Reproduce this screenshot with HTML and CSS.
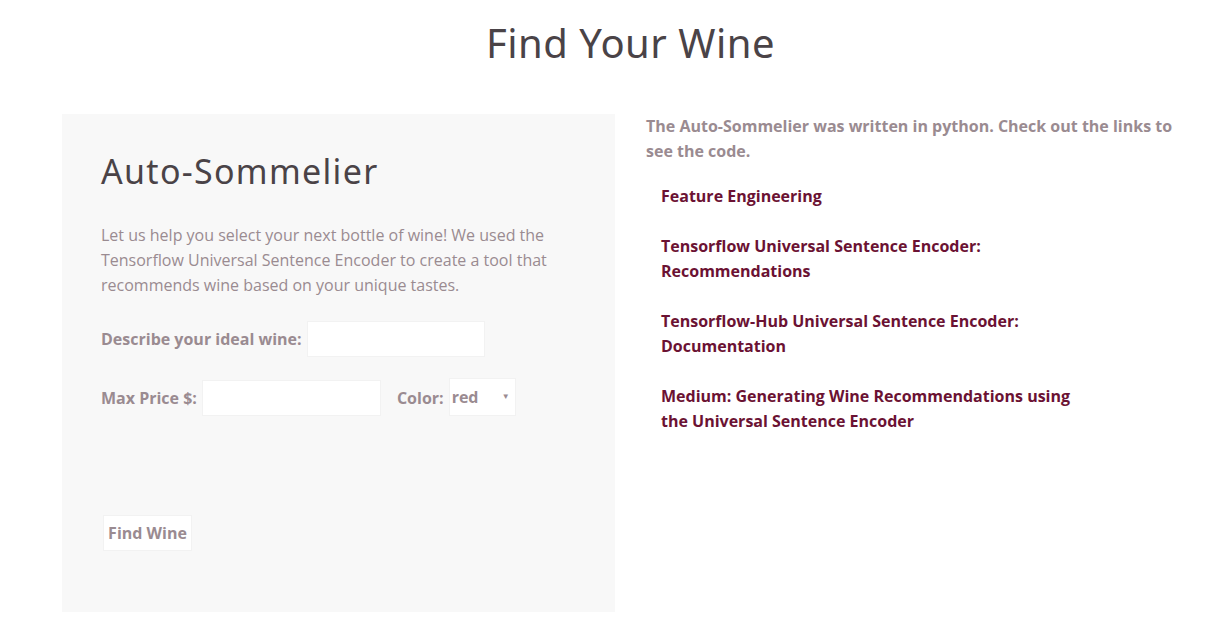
FILE: index.html
```html
<!DOCTYPE html>
<html lang="en">
<head>
<meta charset="utf-8">
<title>Find Your Wine</title>
<link rel="stylesheet" href="styles.css">
</head>
<body>
<h1 class="title">Find Your Wine</h1>
<div class="main">
  <section class="card">
    <h2 class="card-title">Auto-Sommelier</h2>
    <p class="intro">Let us help you select your next bottle of wine! We used the Tensorflow Universal Sentence Encoder to create a tool that recommends wine based on your unique tastes.</p>
    <form class="form">
      <div class="row">
        <label class="label" for="desc">Describe your ideal wine:</label>
        <input class="field field-desc" id="desc" type="text">
      </div>
      <div class="row">
        <label class="label" for="price">Max Price $:</label>
        <input class="field field-price" id="price" type="text">
        <label class="label label-color" for="color">Color:</label>
        <span class="select-wrap">
          <select class="select" id="color">
            <option>red</option>
            <option>white</option>
          </select>
          <span class="arrow">▼</span>
        </span>
      </div>
      <button class="btn" type="button">Find Wine</button>
    </form>
  </section>
  <aside class="side">
    <p class="side-intro">The Auto-Sommelier was written in python. Check out the links to see the code.</p>
    <ul class="links">
      <li><a href="#">Feature Engineering</a></li>
      <li><a href="#">Tensorflow Universal Sentence Encoder: Recommendations</a></li>
      <li><a href="#">Tensorflow-Hub Universal Sentence Encoder: Documentation</a></li>
      <li><a href="#">Medium: Generating Wine Recommendations using the Universal Sentence Encoder</a></li>
    </ul>
  </aside>
</div>
</body>
</html>
```
FILE: styles.css
```css
* { box-sizing: border-box; }
html, body { margin: 0; padding: 0; background: #ffffff; }
body {
  font-family: "Open Sans", "Noto Sans", sans-serif;
  color: #9a8b91;
  width: 1207px;
}
.title {
  margin: 0;
  padding-top: 17px;
  height: 114px;
  text-align: center;
  font-family: "Noto Sans", "Open Sans", sans-serif;
  font-weight: 400;
  font-size: 40px;
  line-height: 52px;
  color: #4a4347;
  letter-spacing: 0.5px;
  padding-left: 54px;
}
.main {
  display: flex;
  align-items: flex-start;
  padding-left: 62px;
  gap: 31px;
}
.card {
  width: 553px;
  height: 498px;
  background: #f8f8f8;
  padding: 37px 40px 0 39px;
}
.card-title {
  margin: 0;
  font-family: "Noto Sans", "Open Sans", sans-serif;
  font-weight: 400;
  font-size: 34px;
  line-height: 40px;
  color: #4a4347;
  letter-spacing: 1.3px;
}
.intro {
  margin: 32px 0 0;
  font-size: 16px;
  line-height: 25px;
  color: #9a8b91;
}
.form { display: flex; flex-direction: column; align-items: flex-start; }
.row {
  display: flex;
  align-items: center;
  margin-top: 23px;
}
.label {
  font-weight: 700;
  font-size: 16px;
  line-height: 22px;
  color: #9a8b91;
  margin-right: 6px;
}
.label-color { margin-left: 16px; margin-right: 5px; }
.field {
  height: 36px;
  border: 1px solid #f2f2f2;
  background: #ffffff;
  font-family: inherit;
  font-size: 16px;
  outline: none;
}
.field-desc { width: 178px; margin-left: -1px; }
.field-price { width: 179px; margin-left: -1px; }
.select-wrap {
  position: relative;
  display: inline-block;
  height: 38px;
  width: 67px;
  margin-top: -2px;
}
.select {
  appearance: none;
  -webkit-appearance: none;
  width: 100%;
  height: 100%;
  border: 1px solid #f2f2f2;
  background: #ffffff;
  padding: 0 0 0 2px;
  font-family: "Open Sans", sans-serif;
  font-weight: 700;
  font-size: 16px;
  color: #9a8b91;
  border-radius: 0;
  outline: none;
}
.arrow {
  position: absolute;
  right: 6px;
  top: 13px;
  font-size: 8px;
  line-height: 10px;
  color: #9a8b91;
  pointer-events: none;
}
.btn {
  margin-top: 99px;
  margin-left: 2px;
  height: 36px;
  width: 89px;
  padding: 0;
  border: 1px solid #f2f2f2;
  background: #ffffff;
  font-family: "Open Sans", sans-serif;
  font-weight: 700;
  font-size: 16px;
  color: #9a8b91;
}
.side {
  width: 530px;
  margin-top: 0;
}
.side-intro {
  margin: 0;
  font-weight: 700;
  font-size: 16px;
  line-height: 25px;
  color: #9a8b91;
}
.links {
  list-style: none;
  margin: 20px 0 0;
  padding: 0 0 0 15px;
  width: 435px;
}
.links li { margin-bottom: 25px; font-size: 16px; line-height: 25px; }
.links a {
  font-weight: 700;
  color: #6b1233;
  text-decoration: none;
}
```
